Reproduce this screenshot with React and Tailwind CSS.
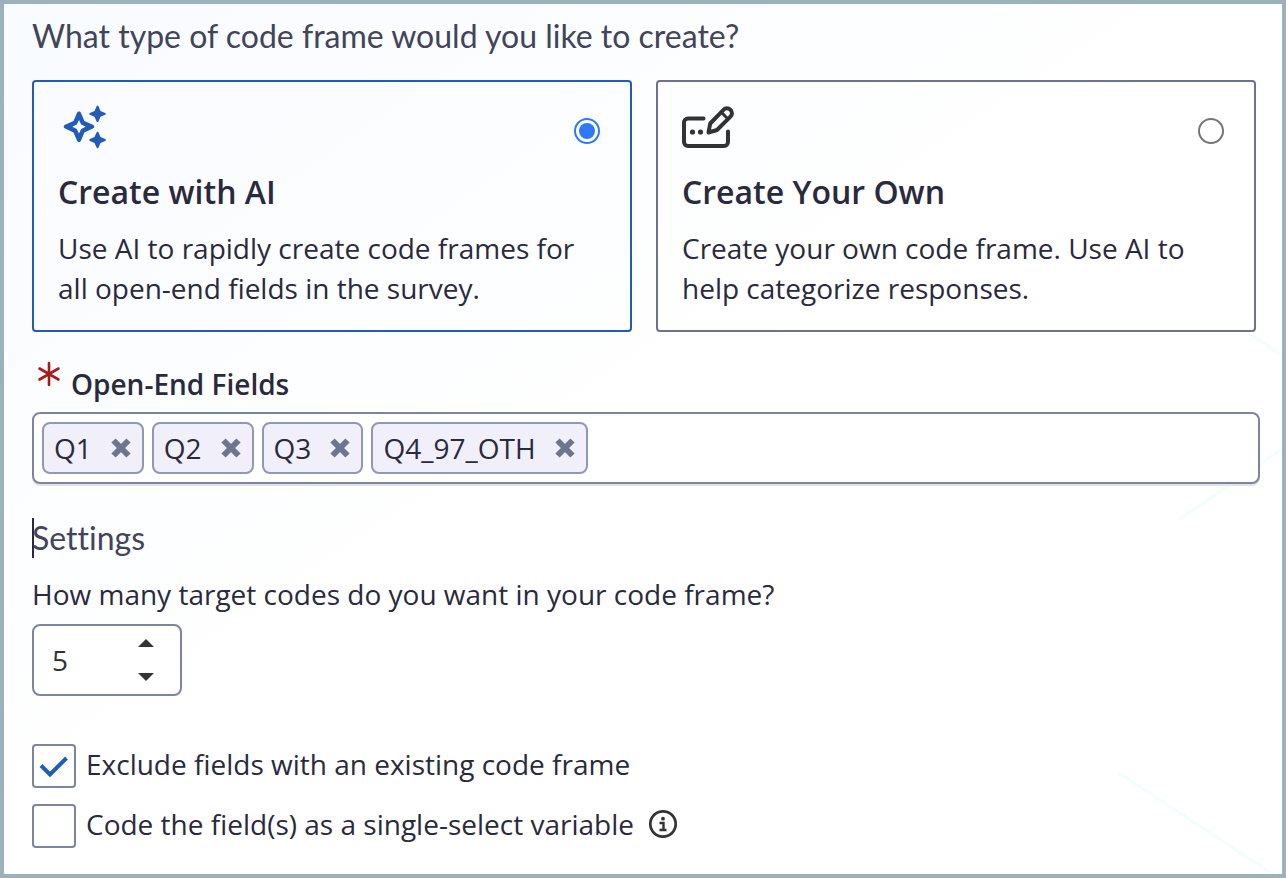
import React, { useState } from "react";

const SparklesIcon = () => (
  <svg viewBox="-4 1 52 48" className="h-12 w-[52px]" fill="#225bb9">
    <path
      fillRule="evenodd"
      d="M17 8.500c.9 0 1.500.4 1.900 1.300l3.500 8.200 8.500 3.800c1.900.9 1.900 3 0 3.800l-8.500 3.900-3.500 8.200c-.8 1.900-3 1.900-3.800 0l-3.600-8.200-8.400-3.900c-1.900-.8-1.900-2.900 0-3.800l8.400-3.800 3.600-8.200c.4-.9 1-1.300 1.900-1.300zM17 17l-2.200 4.500-4.500 2.200 4.500 2.200 2.200 4.500 2.200-4.500 4.500-2.200-4.500-2.200z"
    />
    <path d="M35.500 2.500c.5 0 .8.300 1 .7l2 4.700 4.700 2c.9.400.9 1.400 0 1.800l-4.700 2-2 4.700c-.4.900-1.500.9-1.900 0l-2.100-4.700-4.600-2c-.9-.4-.9-1.400 0-1.800l4.600-2 2.100-4.700c.2-.4.5-.7.900-.7z" />
    <path d="M35.500 28.700c.5 0 .8.300 1 .7l2 4.700 4.700 2c.9.400.9 1.400 0 1.800l-4.700 2-2 4.700c-.4.900-1.500.9-1.900 0l-2.100-4.700-4.600-2c-.9-.4-.9-1.400 0-1.800l4.600-2 2.100-4.700c.2-.4.5-.7.900-.7z" />
  </svg>
);

const WriteIcon = () => (
  <svg
    viewBox="0 -2 56 48"
    className="h-12 w-14"
    fill="none"
    stroke="#333"
    strokeWidth="4"
    strokeLinecap="round"
    strokeLinejoin="round"
  >
    <path d="M21.500 12.500H6a4 4 0 0 0-4 4V36a4 4 0 0 0 4 4h36a4 4 0 0 0 4-4V25.500" />
    <path d="M26.500 26.500l1.700-9L41.500 3.800a4.600 4.600 0 0 1 6.900 0l0 0a4.600 4.600 0 0 1 0 6.900L35 24z" />
    <path d="M39.500 6.500l6 6" strokeWidth="3" />
    <circle cx="10.500" cy="26" r="2.600" fill="#333" stroke="none" />
    <circle cx="18.500" cy="26" r="2.600" fill="#333" stroke="none" />
  </svg>
);

const CrossIcon = () => (
  <svg viewBox="0 0 20 20" className="h-5 w-5" fill="none">
    <path d="M2.500 2.500l15 15M17.500 2.500l-15 15" stroke="#6c7691" strokeWidth="6" />
  </svg>
);

const RequiredIcon = () => (
  <svg viewBox="0 0 24 26" className="mt-px h-[26px] w-6" fill="none">
    <path
      d="M12 2v22M2.500 7.500l19 11M21.500 7.500l-19 11"
      stroke="#a61c1c"
      strokeWidth="2.600"
      strokeLinecap="round"
    />
  </svg>
);

const InfoIcon = () => (
  <svg viewBox="0 0 30 30" className="h-[30px] w-[30px]" fill="none" stroke="#333">
    <circle cx="15" cy="15" r="12.700" strokeWidth="2.700" />
    <circle cx="15" cy="9.700" r="1.900" fill="#333" stroke="none" />
    <path d="M11.500 14h4v7M11.500 21h7" strokeWidth="2.400" />
  </svg>
);

const frameTypes = [
  {
    id: "ai",
    title: "Create with AI",
    text: "Use AI to rapidly create code frames for all open-end fields in the survey.",
    icon: <SparklesIcon />,
  },
  {
    id: "own",
    title: "Create Your Own",
    text: "Create your own code frame. Use AI to help categorize responses.",
    icon: <WriteIcon />,
  },
];

const CheckRow = ({ id, checked, onChange, children }) => (
  <div className="flex items-start gap-2.5">
    <span className="relative h-11 w-11 shrink-0">
      <input
        id={id}
        type="checkbox"
        checked={checked}
        onChange={(e) => onChange(e.target.checked)}
        className="block h-11 w-11 appearance-none rounded border-2 border-[#7d84a3] bg-white"
      />
      {checked && (
        <svg
          viewBox="0 0 44 44"
          className="pointer-events-none absolute inset-0 h-11 w-11"
          fill="none"
        >
          <path d="M9 21.500l9 9L34.500 14" stroke="#225bb9" strokeWidth="4" />
        </svg>
      )}
    </span>
    {children}
  </div>
);

const App = () => {
  const [frameType, setFrameType] = useState("ai");
  const [fields, setFields] = useState(["Q1", "Q2", "Q3", "Q4_97_OTH"]);
  const [target, setTarget] = useState(5);
  const [exclude, setExclude] = useState(true);
  const [single, setSingle] = useState(false);

  return (
    <main className="relative min-h-screen overflow-hidden border-4 border-[#9bb1bc] bg-linear-to-br from-[#f8fbff] via-[#fcfdff] via-25% to-white to-50% pt-3 pr-[22px] pb-6 pl-7 font-['Open_Sans',sans-serif] text-[28px] leading-10 text-[#2a2a3c]">
      {/* faint background streaks */}
      <svg
        viewBox="0 0 170 550"
        className="pointer-events-none absolute right-0 bottom-0 h-[550px] w-[170px]"
        fill="none"
        stroke="#f3fdff"
        strokeWidth="3"
      >
        <path d="M138 10l32 21M68 195l102-70M7 449l155 102" />
      </svg>

      <div className="relative">
        <h1 className="font-[Lato,sans-serif] text-[32px] leading-10 text-[#424459] [font-variant-ligatures:none]">
          What type of code frame would you like to create?
        </h1>
        <div className="mt-6 mr-1 grid grid-cols-2 gap-6">
          {frameTypes.map((type) => (
            <label
              key={type.id}
              htmlFor={type.id}
              className={
                frameType === type.id
                  ? "rounded border-2 border-[#225bb9] px-6 py-[22px]"
                  : "rounded border-2 border-[#6c7290] px-6 py-[22px]"
              }
            >
              <span className="flex items-end justify-between pr-1.5">
                {type.icon}
                <input
                  id={type.id}
                  type="radio"
                  name="frame-type"
                  checked={frameType === type.id}
                  onChange={() => setFrameType(type.id)}
                  className="mb-2 h-[26px] w-[26px] appearance-none rounded-full border-2 border-[#767676] bg-white bg-clip-content p-[3px] checked:border-[#2f78f7] checked:bg-[#2f78f7]"
                />
              </span>
              <span className="mt-5 block text-[32px] font-semibold">
                {type.title}
              </span>
              <span className="mt-4 block">{type.text}</span>
            </label>
          ))}
        </div>

        <div className="mt-7 flex gap-2.5 pl-[5px]">
          <RequiredIcon />
          <label htmlFor="fields" className="mt-1 font-semibold">
            Open-End Fields
          </label>
        </div>
        <div className="mt-2 flex flex-wrap gap-2 rounded-lg border-2 border-[#7d84a3] bg-white p-2 shadow-[0_2px_0_#e3e3e6]">
          {fields.map((field) => (
            <span
              key={field}
              className="flex h-[52px] items-center gap-[19px] rounded-lg border-2 border-[#8f98b5] bg-[#f0effa] pr-[11px] pl-2.5"
            >
              {field}
              <button
                type="button"
                aria-label={`Remove ${field}`}
                onClick={() => setFields(fields.filter((f) => f !== field))}
              >
                <CrossIcon />
              </button>
            </span>
          ))}
          <input id="fields" type="text" className="min-w-0 flex-1 outline-none" />
        </div>

        <h2 className="relative mt-[34px] font-[Lato,sans-serif] text-[32px] leading-10 text-[#424459] [font-variant-ligatures:none]">
          <span className="absolute inset-y-0 left-0 w-0.5 bg-[#2a2a3c]" />
          Settings
        </h2>
        <label htmlFor="target" className="mt-4 block">
          How many target codes do you want in your code frame?
        </label>
        <div className="mt-2.5 flex h-[72px] w-[150px] items-center justify-between rounded-lg border-2 border-[#7d84a3] bg-white pr-[26px] pl-[18px] text-[#333]">
          <input
            id="target"
            type="text"
            inputMode="numeric"
            value={target}
            onChange={(e) => setTarget(Number(e.target.value) || 0)}
            className="w-16 outline-none"
          />
          <div className="flex flex-col gap-[26px]">
            <button
              type="button"
              aria-label="Increase"
              onClick={() => setTarget(target + 1)}
            >
              <svg viewBox="0 0 16 8" className="h-2 w-4" fill="#333">
                <path d="M0 8l8-8 8 8z" />
              </svg>
            </button>
            <button
              type="button"
              aria-label="Decrease"
              onClick={() => setTarget(target - 1)}
            >
              <svg viewBox="0 0 16 8" className="h-2 w-4" fill="#333">
                <path d="M0 0l8 8 8-8z" />
              </svg>
            </button>
          </div>
        </div>

        <div className="mt-12 flex flex-col gap-4">
          <CheckRow id="exclude" checked={exclude} onChange={setExclude}>
            <label htmlFor="exclude">
              Exclude fields with an existing code frame
            </label>
          </CheckRow>
          <CheckRow id="single" checked={single} onChange={setSingle}>
            <label htmlFor="single">
              Code the field(s) as a single-select variable
            </label>
            <button
              type="button"
              aria-label="More information"
              className="ml-1 flex h-10 items-center"
            >
              <InfoIcon />
            </button>
          </CheckRow>
        </div>
      </div>
    </main>
  );
};

export default App;
